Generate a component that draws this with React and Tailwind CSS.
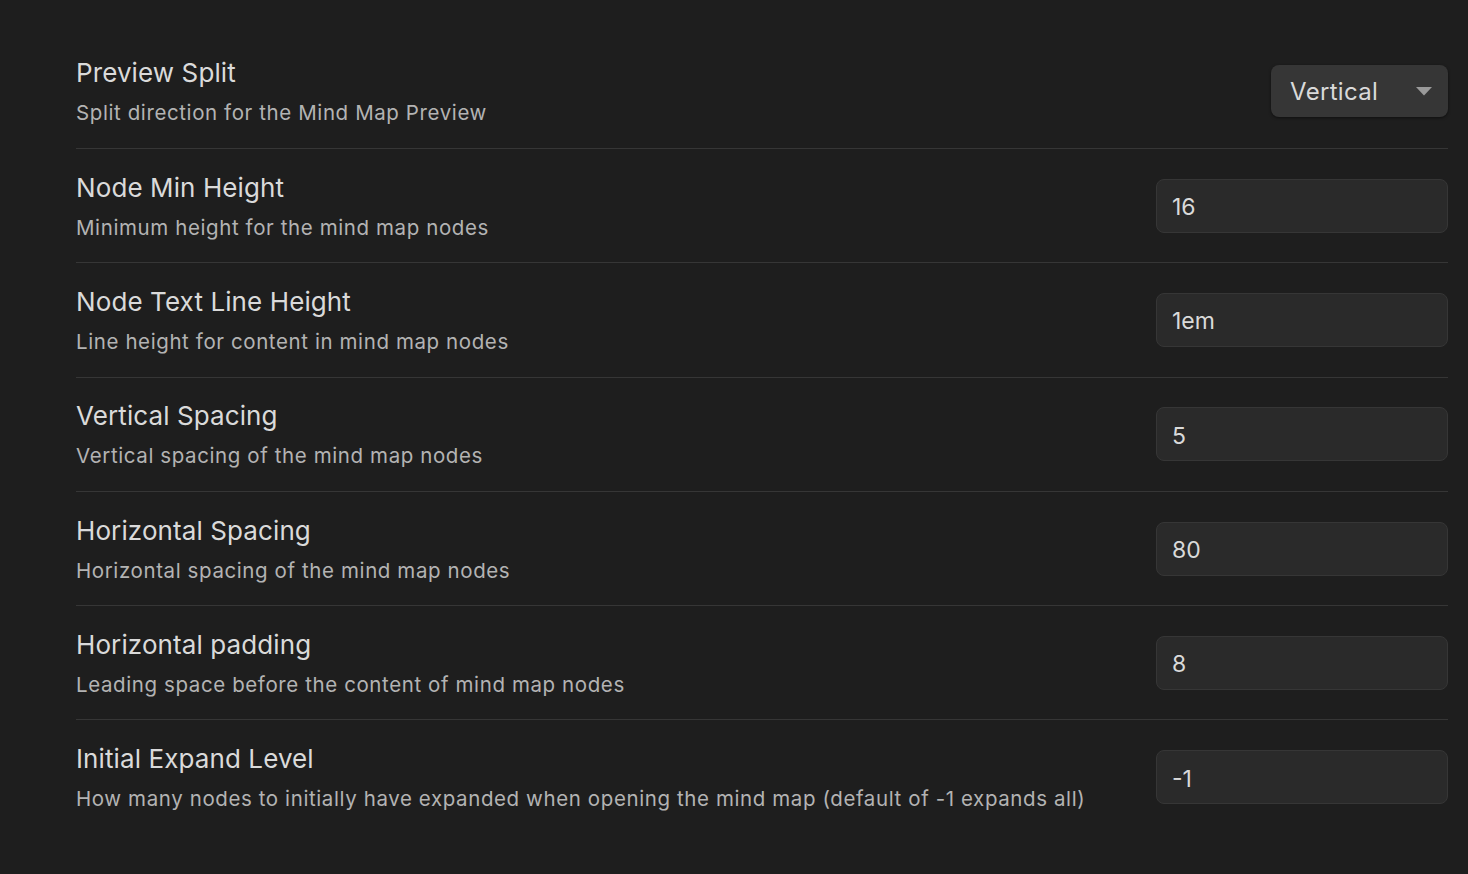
const settings = [
  { name: 'Node Min Height', desc: 'Minimum height for the mind map nodes', value: '16' },
  { name: 'Node Text Line Height', desc: 'Line height for content in mind map nodes', value: '1em' },
  { name: 'Vertical Spacing', desc: 'Vertical spacing of the mind map nodes', value: '5' },
  { name: 'Horizontal Spacing', desc: 'Horizontal spacing of the mind map nodes', value: '80' },
  { name: 'Horizontal padding', desc: 'Leading space before the content of mind map nodes', value: '8' },
  {
    name: 'Initial Expand Level',
    desc: 'How many nodes to initially have expanded when opening the mind map (default of -1 expands all)',
    value: '-1',
  },
];

function Info({ name, desc }) {
  return (
    <div className="flex flex-col gap-[12px] pt-[2px]">
      <div className="text-[26px] leading-[30px] text-[#dadada] tracking-[0.1px]">{name}</div>
      <div className="text-[20.5px] leading-[26px] text-[#b3b3b3] tracking-[0.6px]">{desc}</div>
    </div>
  );
}

export default function App() {
  return (
    <div
      className="min-h-[874px] w-full bg-[#1e1e1e] pl-[76px] pr-[20px] pt-[34px]"
      style={{ fontFamily: 'Inter, "Noto Sans", sans-serif' }}
    >
      <div className="flex h-[114px] items-center justify-between">
        <Info name="Preview Split" desc="Split direction for the Mind Map Preview" />
        <button className="flex h-[52px] w-[177px] items-center justify-between rounded-[8px] bg-[#363636] pl-[19px] pr-[16px] text-[24px] text-[#dadada] tracking-[0.3px] shadow-[0_1px_3px_rgba(0,0,0,0.5)]">
          <span className="pt-[2px]">Vertical</span>
          <svg width="16" height="9" viewBox="0 0 16 9">
            <path d="M0 0 H16 L8 8.5 Z" fill="#9a9a9a" />
          </svg>
        </button>
      </div>
      {settings.map(s => (
        <div key={s.name} className="flex h-[114.3px] items-center justify-between border-t border-[#363636]">
          <Info name={s.name} desc={s.desc} />
          <input
            readOnly
            value={s.value}
            className="h-[54px] w-[292px] rounded-[8px] border border-[#363636] bg-[#2a2a2a] px-[15px] pt-[3px] text-[23px] text-[#dadada] outline-none"
          />
        </div>
      ))}
    </div>
  );
}
